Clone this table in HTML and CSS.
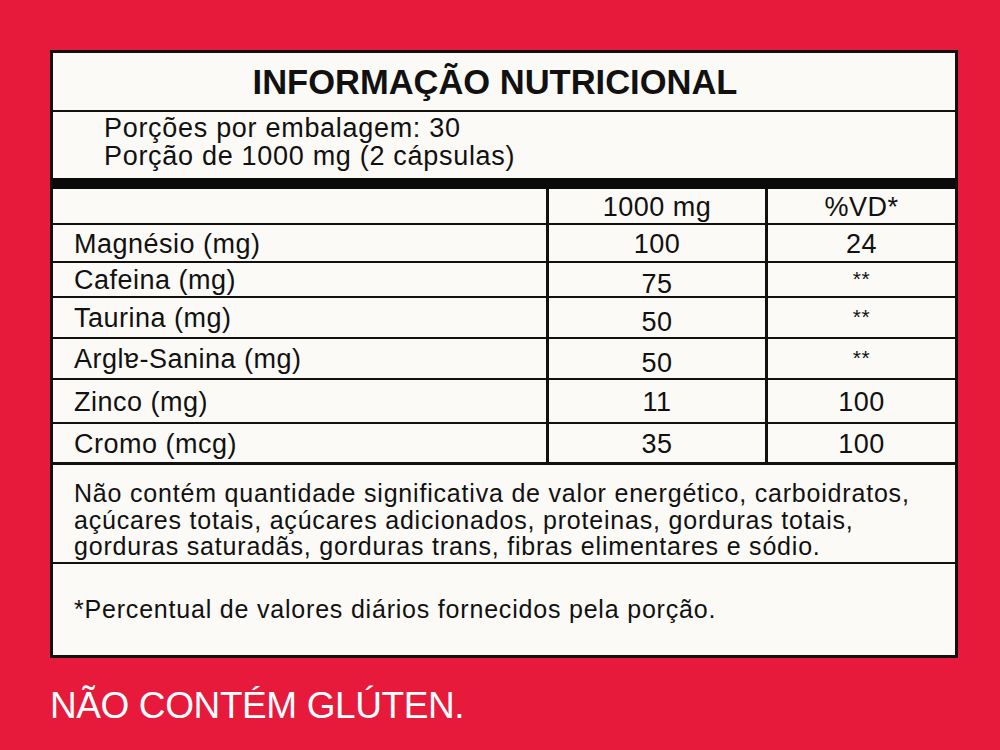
FILE: index.html
```html
<!DOCTYPE html>
<html lang="pt">
<head>
<meta charset="utf-8">
<title>Informação Nutricional</title>
<link rel="stylesheet" href="styles.css">
</head>
<body>
<main class="page">
  <section class="label">
    <h1 class="title">INFORMAÇÃO NUTRICIONAL</h1>
    <div class="serving">
      <p>Porções por embalagem: 30</p>
      <p>Porção de 1000 mg (2 cápsulas)</p>
    </div>
    <div class="grid">
      <div class="cell name r-head"></div>
      <div class="cell val r-head">1000 mg</div>
      <div class="cell vd r-head">%VD*</div>

      <div class="cell name r1">Magnésio (mg)</div>
      <div class="cell val r1">100</div>
      <div class="cell vd r1">24</div>

      <div class="cell name r2">Cafeina (mg)</div>
      <div class="cell val r2 low">75</div>
      <div class="cell vd r2 stars">**</div>

      <div class="cell name r3">Taurina (mg)</div>
      <div class="cell val r3 low">50</div>
      <div class="cell vd r3 stars">**</div>

      <div class="cell name r4">Arglɐ-Sanina (mg)</div>
      <div class="cell val r4 low">50</div>
      <div class="cell vd r4 stars">**</div>

      <div class="cell name r5">Zinco (mg)</div>
      <div class="cell val r5">11</div>
      <div class="cell vd r5">100</div>

      <div class="cell name r6">Cromo (mcg)</div>
      <div class="cell val r6">35</div>
      <div class="cell vd r6">100</div>
    </div>
    <div class="notes">
      <p>Não contém quantidade significativa de valor energético, carboidratos,<br>açúcares totais, açúcares adicionados, proteinas, gorduras totais,<br>gorduras saturadãs, gorduras trans, fibras elimentares e sódio.</p>
    </div>
    <div class="footnote">
      <p>*Percentual de valores diários fornecidos pela porção.</p>
    </div>
  </section>
  <p class="gluten">NÃO CONTÉM GLÚTEN.</p>
</main>
</body>
</html>
```

FILE: styles.css
```css
* { box-sizing: border-box; }

html, body {
  margin: 0;
  padding: 0;
}

body {
  width: 1000px;
  height: 750px;
  overflow: hidden;
  background: #e81a3b;
  font-family: "Liberation Sans", Arial, sans-serif;
  color: #111;
}

.page {
  padding: 50px 0 0 50px;
}

p { margin: 0; }

.label {
  width: 908px;
  height: 608px;
  border: 3px solid #111;
  background: #fbfaf6;
  display: flex;
  flex-direction: column;
}

.title {
  margin: 0;
  height: 59px;
  border-bottom: 2px solid #111;
  font-size: 34.5px;
  font-weight: 700;
  text-align: center;
  line-height: 59px;
  padding-right: 18px;
}

.serving {
  height: 77px;
  border-bottom: 11px solid #0a0a0a;
  padding: 2px 0 0 51px;
  font-size: 27px;
  letter-spacing: 0.7px;
  line-height: 28px;
}

.grid {
  display: grid;
  grid-template-columns: 496px 219px 1fr;
  grid-template-rows: 36px 38px 35px 41px 41px 44px 41px;
  font-size: 27px;
  letter-spacing: 0.5px;
}

.cell {
  border-bottom: 2px solid #111;
  display: flex;
  align-items: center;
  padding-top: 2px;
}

.r6 { border-bottom-width: 3px; }

.name {
  border-right: 3px solid #111;
  padding-left: 21px;
}

.val {
  border-right: 3px solid #111;
  justify-content: center;
}

.vd {
  justify-content: center;
}

.low { padding-top: 9px; }

.stars {
  font-size: 21px;
  padding-bottom: 4px;
}

.notes {
  height: 99px;
  border-bottom: 2px solid #111;
  padding: 15px 0 0 21px;
  font-size: 25px;
  letter-spacing: 0.8px;
  line-height: 26.5px;
}

.footnote {
  flex: 1;
  display: flex;
  align-items: center;
  padding-left: 21px;
  font-size: 25px;
  letter-spacing: 0.8px;
}

.gluten {
  margin-top: 27px;
  color: #ffffff;
  font-size: 37px;
  letter-spacing: -0.4px;
}
```
